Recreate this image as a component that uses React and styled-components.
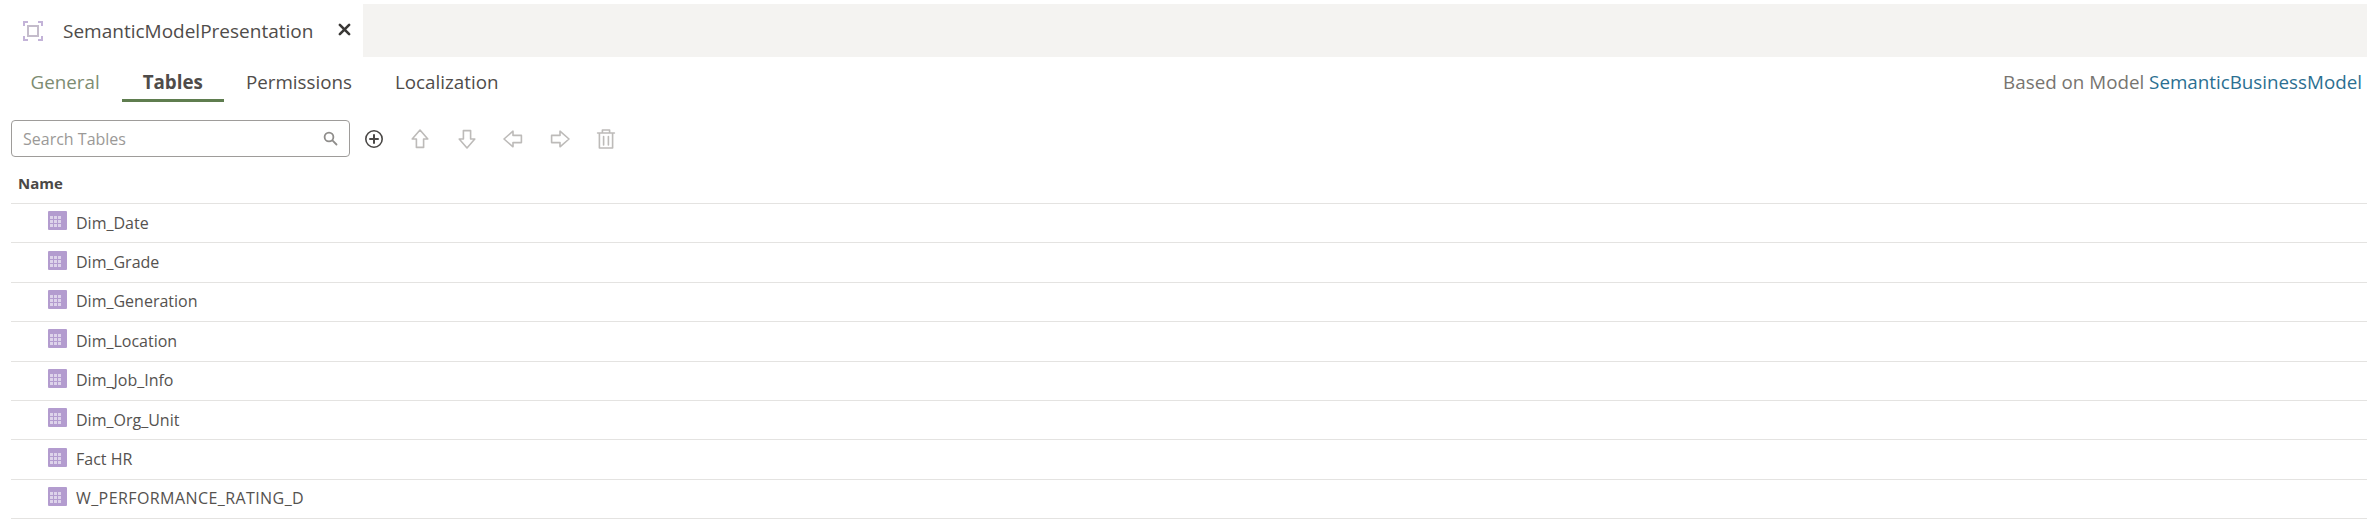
import React from "react";
import styled, { createGlobalStyle } from "styled-components";

const Global = createGlobalStyle`
  html, body { margin: 0; padding: 0; background: #fff; }
  body { font-family: "Open Sans", "Noto Sans", sans-serif; color: #4a4846; }
`;

const Page = styled.div`
  width: 2374px;
  height: 532px;
  box-sizing: border-box;
  padding: 4px 7px 0 0;
  overflow: hidden;
`;

const TabStrip = styled.div`
  display: flex;
  height: 53px;
`;

const DocTab = styled.div`
  width: 363px;
  box-sizing: border-box;
  display: flex;
  align-items: center;
  padding-left: 23px;
  background: #fff;
`;

const DocTitle = styled.span`
  margin-left: 20px;
  font-size: 19px;
  color: #4f4c4a;
  white-space: nowrap;
`;

const CloseBtn = styled.span`
  display: flex;
  margin-left: 25px;
  margin-top: -2px;
  color: #3a3836;
`;

const TabFill = styled.div`
  flex: 1;
  background: #f4f3f1;
`;

const NavRow = styled.div`
  display: flex;
  align-items: flex-start;
  justify-content: space-between;
  height: 48px;
`;

const NavTabs = styled.div`
  display: flex;
  gap: 1px;
  padding-left: 9.5px;
`;

const NavTab = styled.div`
  height: 45px;
  box-sizing: border-box;
  padding: 13px 21px 0;
  font-size: 18.8px;
  line-height: 24px;
  font-weight: ${(p) => (p.$active ? 700 : 400)};
  color: ${(p) => (p.$muted ? "#7d8c72" : "#4f4c4a")};
  border-bottom: 3px solid ${(p) => (p.$active ? "#5f7d4f" : "transparent")};
  white-space: nowrap;
`;

const ModelNote = styled.div`
  padding: 13px 5px 0 0;
  font-size: 18.8px;
  line-height: 24px;
  color: #77746f;
  white-space: nowrap;
`;

const ModelLink = styled.span`
  color: #2b6f91;
`;

const Toolbar = styled.div`
  display: flex;
  align-items: center;
  height: 39px;
  padding-left: 11px;
  margin-top: 14px;
`;

const SearchBox = styled.div`
  width: 339px;
  height: 37px;
  box-sizing: border-box;
  border: 1.5px solid #9e9c9a;
  border-radius: 4px;
  display: flex;
  align-items: center;
  justify-content: space-between;
  padding: 0 11px 0 11px;
`;

const SearchHint = styled.span`
  font-size: 16px;
  color: #9b9997;
`;

const IconBtn = styled.span`
  display: flex;
  flex: none;
  width: 24px;
  height: 24px;
  align-items: center;
  justify-content: center;
  color: ${(p) => (p.$on ? "#4a4846" : "#bdbbb9")};
  margin-left: ${(p) => p.$gap}px;
`;

const Table = styled.div`
  padding-left: 11px;
  margin-top: 6px;
`;

const HeadRow = styled.div`
  height: 40px;
  box-sizing: border-box;
  padding: 0 0 1px 7px;
  display: flex;
  align-items: center;
  font-size: 15px;
  font-weight: 700;
  color: #4a4846;
  border-bottom: 1.5px solid #e4e3e1;
`;

const Row = styled.div`
  height: 39.4px;
  box-sizing: border-box;
  padding: 0 0 1px 37px;
  display: flex;
  align-items: center;
  gap: 8px;
  font-size: 16px;
  color: #55524f;
  border-bottom: 1.5px solid #e4e3e1;
`;

const RowLabel = styled.span`
  letter-spacing: ${(p) => (p.$caps ? "0.42px" : "0")};
`;

const RowIconWrap = styled.span`
  display: flex;
  margin-top: -3px;
`;

const Stroke = ({ size = 24, sw = 1.35, children }) => (
  <svg width={size} height={size} viewBox="0 0 20 20" fill="none" stroke="currentColor" strokeWidth={sw} strokeLinejoin="round" strokeLinecap="round">
    {children}
  </svg>
);

const ModelIcon = () => (
  <svg width="20" height="20" viewBox="0 0 20 20" fill="none" stroke="#c3b3d8" strokeWidth="2">
    <path d="M1 5V1h4M15 1h4v4M19 15v4h-4M5 19H1v-4" />
    <rect x="5" y="5" width="10" height="10" stroke="#c4bccb" strokeWidth="2" />
  </svg>
);

const TableIcon = () => (
  <svg width="20" height="20" viewBox="0 0 20 20">
    <rect width="19" height="19" x="0" y="0" rx="1" fill="#b39ccf" />
    <g fill="#ddd3ea">
      {[5, 9, 13].flatMap((y) =>
        [2, 6, 10].map((x) => <rect key={`${x}-${y}`} x={x} y={y} width="3" height="3" />)
      )}
    </g>
  </svg>
);

const rows = ["Dim_Date", "Dim_Grade", "Dim_Generation", "Dim_Location", "Dim_Job_Info", "Dim_Org_Unit", "Fact HR", "W_PERFORMANCE_RATING_D"];

export default function App() {
  return (
    <Page>
      <Global />
      <TabStrip>
        <DocTab>
          <ModelIcon />
          <DocTitle>SemanticModelPresentation</DocTitle>
          <CloseBtn>
            <svg width="13" height="13" viewBox="0 0 14 14" stroke="currentColor" strokeWidth="2.8" strokeLinecap="round">
              <path d="M2 2l10 10M12 2L2 12" />
            </svg>
          </CloseBtn>
        </DocTab>
        <TabFill />
      </TabStrip>
      <NavRow>
        <NavTabs>
          <NavTab $muted>General</NavTab>
          <NavTab $active>Tables</NavTab>
          <NavTab>Permissions</NavTab>
          <NavTab>Localization</NavTab>
        </NavTabs>
        <ModelNote>
          Based on Model <ModelLink>SemanticBusinessModel</ModelLink>
        </ModelNote>
      </NavRow>
      <Toolbar>
        <SearchBox>
          <SearchHint>Search Tables</SearchHint>
          <svg width="15" height="15" viewBox="0 0 15 15" fill="none" stroke="#8f8d8b" strokeWidth="1.8">
            <circle cx="6" cy="6" r="4.4" />
            <path d="M9.4 9.4L13.5 13.5" strokeLinecap="round" />
          </svg>
        </SearchBox>
        <IconBtn $on $gap={12}>
          <Stroke size={20} sw={1.6}>
            <circle cx="10" cy="10" r="8.2" />
            <path d="M10 6v8M6 10h8" strokeWidth="2" />
          </Stroke>
        </IconBtn>
        <IconBtn $gap={22.4}>
          <Stroke><path d="M10 2.5L3.5 10H7v7h6v-7h3.5z" /></Stroke>
        </IconBtn>
        <IconBtn $gap={22.4}>
          <Stroke><path d="M10 17.5L3.5 10H7V3h6v7h3.5z" /></Stroke>
        </IconBtn>
        <IconBtn $gap={22.4}>
          <Stroke><path d="M2.5 10L10 3.5V7h7v6h-7v3.5z" /></Stroke>
        </IconBtn>
        <IconBtn $gap={22.4}>
          <Stroke><path d="M17.5 10L10 3.5V7H3v6h7v3.5z" /></Stroke>
        </IconBtn>
        <IconBtn $gap={22.4}>
          <Stroke><path d="M3 5h14M7 5V2.5h6V5M4.5 5v12.5h11V5M8 8v7M12 8v7" /></Stroke>
        </IconBtn>
      </Toolbar>
      <Table>
        <HeadRow>Name</HeadRow>
        {rows.map((r) => (
          <Row key={r}>
            <RowIconWrap><TableIcon /></RowIconWrap>
            <RowLabel $caps={r === r.toUpperCase()}>{r}</RowLabel>
          </Row>
        ))}
      </Table>
    </Page>
  );
}
